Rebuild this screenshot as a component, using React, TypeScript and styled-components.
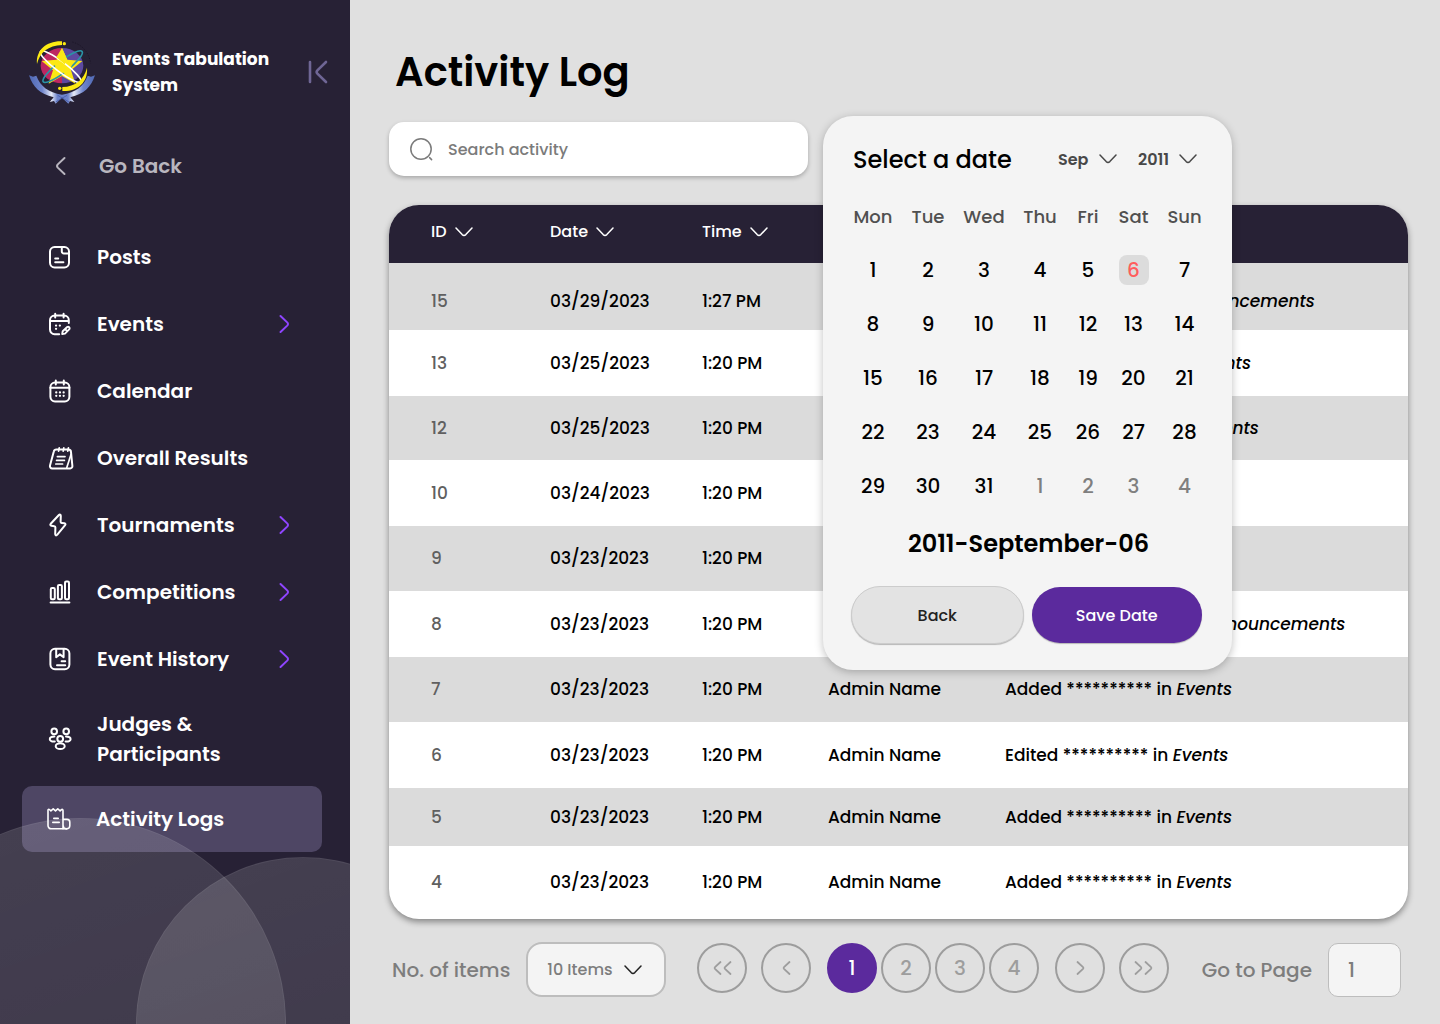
import React, { useState } from "react";
import styled, { createGlobalStyle, css } from "styled-components";

const ink = "#272135";
const purple = "#5b2a9d";

const GlobalStyle = createGlobalStyle`
  *, *::before, *::after { box-sizing: border-box; }
  body {
    margin: 0;
    background: #e0e0e0;
    font-family: Poppins, Inter, "Open Sans", sans-serif;
    font-size: 16px;
    font-weight: 500;
    color: #000;
  }
  button, input, select { font: inherit; color: inherit; }
  button, select { cursor: pointer; }
`;

const Page = styled.div`
  display: flex;
  min-height: 100vh;
`;

/* ---------- sidebar ---------- */

const Sidebar = styled.aside`
  position: relative;
  flex: none;
  width: 350px;
  overflow: hidden;
  background: ${ink};
  color: #fff;
`;

const Brand = styled.header`
  display: flex;
  align-items: center;
  height: 144px;
  padding: 0 20px 0 29px;
`;

const BrandName = styled.p`
  flex: 1;
  margin: 0 0 0 15px;
  font-size: 17px;
  font-weight: 700;
  line-height: 26px;
`;

const CollapseButton = styled.button`
  display: flex;
  padding: 0;
  border: 0;
  background: none;
  color: #6f6695;
`;

const BackLink = styled.a`
  display: flex;
  align-items: center;
  gap: 33px;
  height: 44px;
  margin-bottom: 35px;
  padding-left: 55px;
  color: #b9b6bf;
  font-size: 20px;
  font-weight: 600;
  text-decoration: none;
`;

const NavList = styled.ul`
  margin: 0;
  padding: 0 28px 0 22px;
  list-style: none;
`;

const NavLink = styled.a<{ $active?: boolean; $tall?: boolean }>`
  display: flex;
  align-items: center;
  gap: 26px;
  height: ${(p) => (p.$tall ? 94 : p.$active ? 66 : 67)}px;
  padding: 0 32px 0 ${(p) => (p.$active ? 24 : 25)}px;
  border-radius: 10px;
  background: ${(p) => (p.$active ? "#4e4664" : "transparent")};
  color: #fff;
  font-size: 20px;
  font-weight: 600;
  line-height: 30px;
  text-decoration: none;
  svg { overflow: visible; }
`;

const NavText = styled.span`
  flex: 1;
`;

const Bubble = styled.div<{ $size: number; $left: number }>`
  position: absolute;
  bottom: ${(p) => -p.$size / 2}px;
  left: ${(p) => p.$left}px;
  width: ${(p) => p.$size}px;
  height: ${(p) => p.$size}px;
  border: 1px solid rgba(255, 255, 255, 0.06);
  border-radius: 50%;
  background: linear-gradient(160deg, rgba(255, 255, 255, 0.14), rgba(255, 255, 255, 0.1));
  pointer-events: none;
`;

/* ---------- main ---------- */

const Main = styled.main`
  flex: 1;
  min-width: 0;
  padding: 42px 32px 26px 39px;
`;

const Title = styled.h1`
  margin: 0 0 20px 6px;
  font-size: 40px;
  font-weight: 600;
  line-height: 60px;
`;

const Toolbar = styled.div`
  position: relative;
  width: 419px;
  margin-bottom: 29px;
`;

const SearchBox = styled.label`
  display: flex;
  align-items: center;
  gap: 14px;
  height: 54px;
  padding: 0 20px;
  border-radius: 15px;
  background: #fff;
  color: #7b7b7b;
  box-shadow: 0 2px 4px rgba(0, 0, 0, 0.25);
`;

const SearchInput = styled.input`
  flex: 1;
  min-width: 0;
  padding: 0;
  border: 0;
  outline: 0;
  background: none;
  &::placeholder { color: #7b7b7b; opacity: 1; }
`;

const TableCard = styled.div`
  overflow: hidden;
  border-radius: 30px;
  background: #fff;
  box-shadow: 0 3px 6px rgba(0, 0, 0, 0.4);
`;

const LogTable = styled.table`
  width: 100%;
  table-layout: fixed;
  border-collapse: collapse;
  text-align: left;
`;

const Column = styled.col<{ $width?: number }>`
  width: ${(p) => (p.$width ? `${p.$width}px` : "auto")};
`;

const HeadRow = styled.tr`
  height: 58px;
  background: ${ink};
  color: #fff;
`;

const HeadCell = styled.th`
  padding: 0 0 5px;
  font-weight: 500;
  &:first-child { padding-left: 42px; }
`;

const SortButton = styled.button`
  display: flex;
  align-items: center;
  gap: 8px;
  padding: 0;
  border: 0;
  background: none;
`;

const Cell = styled.td`
  padding: 0 0 1px;
  font-size: 17px;
  white-space: nowrap;
  &:first-child { padding-left: 42px; color: #606060; }
`;

const Row = styled.tr<{ $height: number }>`
  height: ${(p) => p.$height}px;
  &:nth-child(odd) { background: #dbdbdb; }
  &:first-child ${Cell} { padding-top: 10px; }
`;

/* ---------- date picker ---------- */

const Picker = styled.section`
  position: absolute;
  top: -6px;
  left: calc(100% + 15px);
  z-index: 1;
  width: 409px;
  padding: 12px 20px 26px 22px;
  border-radius: 30px;
  background: #f4f4f4;
  box-shadow: 0 2px 8px rgba(0, 0, 0, 0.25);
`;

const PickerHead = styled.div`
  display: flex;
  align-items: center;
  height: 62px;
  padding: 0 15px 0 8px;
`;

const PickerTitle = styled.h2`
  flex: 1;
  margin: 0;
  font-size: 24px;
  font-weight: 500;
`;

const Drop = styled.div`
  display: grid;
  align-items: center;
  width: 59px;
  margin-left: 21px;
  color: #484848;
  > * { grid-area: 1 / 1; }
  > svg { justify-self: end; pointer-events: none; }
`;

const PlainSelect = styled.select`
  width: 100%;
  padding: 0;
  border: 0;
  outline: 0;
  appearance: none;
  background: none;
  font-size: 16px;
  font-weight: 600;
`;

const Days = styled.table`
  border-collapse: collapse;
  table-layout: fixed;
  width: 366px;
  text-align: center;
  tbody tr { height: 54px; }
  td { padding: 0; }
`;

const WeekDay = styled.th`
  height: 53px;
  padding: 0;
  color: #505050;
  font-size: 18px;
  font-weight: 500;
`;

const Day = styled.button<{ $muted?: boolean; $selected?: boolean }>`
  width: 30px;
  height: 30px;
  padding: 0;
  border: 0;
  border-radius: 8px;
  background: ${(p) => (p.$selected ? "#dcdcdc" : "none")};
  color: ${(p) => (p.$selected ? "#ff5c5c" : p.$muted ? "#7f7f7f" : "#000")};
  font-size: 20px;
`;

const Chosen = styled.output`
  display: block;
  font-size: 24px;
  font-weight: 600;
  line-height: 62px;
  text-align: center;
`;

const Actions = styled.div`
  display: flex;
  align-items: center;
  gap: 8px;
  margin-top: 11px;
  padding: 0 10px 0 6px;
`;

const Action = styled.button<{ $primary?: boolean }>`
  flex: 1;
  height: 58px;
  border: 1px solid #cccccc;
  border-radius: 29px;
  background: #e3e3e3;
  color: #222;
  box-shadow: 0 1px 1px rgba(0, 0, 0, 0.25);
  ${(p) =>
    p.$primary &&
    css`
      height: 56px;
      border: 0;
      background: ${purple};
      color: #fff;
    `}
`;

/* ---------- footer ---------- */

const Footer = styled.footer`
  display: flex;
  align-items: center;
  justify-content: space-between;
  margin-top: 23px;
  padding: 0 7px 0 3px;
  color: #7d7d7d;
  font-size: 20px;
`;

const Group = styled.div`
  display: flex;
  align-items: center;
  gap: 16px;
`;

const SizeBox = styled.div`
  display: grid;
  align-items: center;
  width: 140px;
  height: 55px;
  border: 2px solid #bdbdbd;
  border-radius: 16px;
  background: #f4f4f4;
  > * { grid-area: 1 / 1; }
  > svg { justify-self: end; margin-right: 22px; color: #222; pointer-events: none; }
`;

const SizeSelect = styled.select`
  width: 100%;
  height: 100%;
  padding: 0 19px;
  border: 0;
  outline: 0;
  appearance: none;
  background: none;
  color: #7d7d7d;
  font-size: 16px;
`;

const Pager = styled.nav`
  display: flex;
  align-items: center;
  gap: 14px;
  padding: 0 2px 4px 0;
`;

const Numbers = styled.div`
  display: flex;
  gap: 4px;
  margin: 0 2px;
`;

const PageButton = styled.button<{ $current?: boolean }>`
  display: flex;
  align-items: center;
  justify-content: center;
  width: 50px;
  height: 50px;
  padding: 0;
  border: 2px solid ${(p) => (p.$current ? purple : "#9d9d9d")};
  border-radius: 50%;
  background: ${(p) => (p.$current ? purple : "none")};
  color: ${(p) => (p.$current ? "#fff" : "#9d9d9d")};
`;

const PageInput = styled.input`
  width: 73px;
  height: 54px;
  padding: 0 19px;
  border: 1px solid #bdbdbd;
  border-radius: 10px;
  outline: 0;
  background: #f4f4f4;
`;

/* ---------- drawings ---------- */

const Chevron = () => (
  <svg width="18" height="10" viewBox="0 0 18 10" fill="none" stroke="currentColor" strokeWidth="1.5" strokeLinecap="round" strokeLinejoin="round" aria-hidden="true">
    <path d="M1 1l6.2 6.6q1.8 1.8 3.6 0L17 1" />
  </svg>
);

const SideChevron = ({ left = false, color = "currentColor" }: { left?: boolean; color?: string }) => (
  <svg width="11" height="20" viewBox="0 0 11 20" fill="none" stroke={color} strokeWidth="2" strokeLinecap="round" strokeLinejoin="round" aria-hidden="true">
    {left ? <path d="M9.5 2L2.8 8.4q-1.6 1.6 0 3.2L9.5 18" /> : <path d="M1.5 2l6.7 6.4q1.6 1.6 0 3.2L1.5 18" />}
  </svg>
);

const Arrows = ({ d, width }: { d: string; width: number }) => (
  <svg width={width} height="16" viewBox={`0 0 ${width} 16`} fill="none" stroke="currentColor" strokeWidth="1.8" strokeLinecap="round" strokeLinejoin="round" aria-hidden="true">
    <path d={d} />
  </svg>
);

const NavIcon = ({ light, children }: { light?: boolean; children: React.ReactNode }) => (
  <svg width="24" height="24" viewBox="0 0 24 24" fill="none" stroke="currentColor" strokeWidth={light ? 1.6 : 2} strokeLinecap="round" strokeLinejoin="round" aria-hidden="true">
    {children}
  </svg>
);

const icons: Record<string, React.ReactNode> = {
  posts: (
    <>
      <rect x="3" y="2" width="19" height="20.4" rx="4.6" />
      <path d="M14.8 2v4.4a2 2 0 0 0 2 2h5M8.2 13.4h3M8.2 17.3h8.2" />
    </>
  ),
  events: (
    <>
      <path d="M21.8 11V8.2a4.6 4.6 0 0 0-4.6-4.6H7.6A4.6 4.6 0 0 0 3 8.2v9.4a4.6 4.6 0 0 0 4.6 4.6h4.6M3 9h18.8M8.2 1.8v3.6M16.6 1.8v3.6" />
      <path d="M9 13.6h.1M12.8 13.6h.1M9 16.8h.1" strokeWidth="2.2" />
      <path d="M15.2 22l.5-2.8 4.5-4.2a1.6 1.6 0 0 1 2.2 2.2l-4.4 4.4zM18.6 17.6l1 1" strokeWidth="1.9" />
    </>
  ),
  calendar: (
    <>
      <rect x="3.4" y="3.6" width="19" height="18.8" rx="4.6" />
      <path d="M3.4 8.8h19M8.8 1.6v3.8M16.8 1.6v3.8" />
      <path d="M9.2 13.4h.1M12.9 13.4h.1M16.6 13.4h.1M9.2 16.8h.1M12.9 16.8h.1M16.6 16.8h.1" strokeWidth="2.2" />
    </>
  ),
  results: (
    <>
      <path d="M9.4 3.6h12a2.6 2.6 0 0 1 2.6 2.6l1.4 13.8a2.2 2.2 0 0 1-2.2 2.4H5.2A2.2 2.2 0 0 1 3 19.6L6.8 5.6a2.6 2.6 0 0 1 2.6-2z" />
      <path d="M12.2 1.8l-.6 3.4M16.8 1.8l-.6 3.4M21.4 1.8l-.6 3.4M10.4 10.6h7.6M9.6 14.4h7.8M8.8 18h6.8M24 8.4L19.8 21.6" strokeWidth="1.7" />
    </>
  ),
  bolt: <path d="M11.9 2L3.7 10.8c-.7.8-.4 1.8.7 2l3 .5c.7.1 1 .5 1 1.2l-.2 6.6c0 1.300 1 1.700 1.900.8l8-9.700c.7-.9.4-1.700-.7-1.900l-2.800-.4c-.7-.1-1-.5-1-1.200l.2-5.800C13.800 1.500 12.800 1.100 11.900 2z" />,
  bars: (
    <>
      <path d="M3.600 22.600h18.800" />
      <rect x="3.800" y="8" width="4" height="11.200" rx="1.200" />
      <rect x="10.900" y="5" width="4" height="14.200" rx="1.200" />
      <rect x="18" y="1.600" width="4" height="17.600" rx="1.200" />
    </>
  ),
  history: (
    <>
      <rect x="3.400" y="1.800" width="19" height="20.400" rx="4.600" />
      <path d="M9.200 2v8.200l3.700-2.800 3.700 2.800V2M14.600 14.200h3.600M10 18.200h8.200" />
    </>
  ),
  people: (
    <>
      <circle cx="7.200" cy="4.400" r="2.800" />
      <circle cx="19.200" cy="4.400" r="2.800" />
      <circle cx="13.200" cy="11.800" r="2.900" />
      <ellipse cx="13.200" cy="19.200" rx="4.500" ry="2.900" />
      <path d="M7.800 14.400C4.900 14.800 2.800 13.800 2.800 12.200c0-1.500 1.900-2.700 4.600-2.700M18.600 14.400c2.900.4 5-.6 5-2.200 0-1.500-1.900-2.700-4.600-2.700" />
    </>
  ),
  logs: (
    <>
      <path d="M17 3.400v18.400H5.200A3.200 3.200 0 0 1 2 18.600V3.200c0-.8.800-1.200 1.400-.7l1.500 1.300 2.300-2 2.300 2 2.300-2 2.300 2 1.400-1.200c.6-.5 1.500-.1 1.500.8zM17 12.400h4a2.800 2.800 0 0 1 2.800 2.800v3.400a3.300 3.300 0 0 1-6.600 0" />
      <path d="M7.800 11.400h4.400M6.800 15.400h6.400M17 21.800h3.600" />
    </>
  ),
};

const Logo = () => (
  <svg width="68" height="64" viewBox="28 32 204 192" role="img" aria-label="Events Tabulation System logo">
    <defs>
      <linearGradient id="ribbon">
        <stop offset="0" stopColor="#4f68b4" />
        <stop offset=".2" stopColor="#6f85cc" />
        <stop offset=".34" stopColor="#e6eaf8" />
        <stop offset=".43" stopColor="#6d83cb" />
        <stop offset=".59" stopColor="#6d83cb" />
        <stop offset=".68" stopColor="#e6eaf8" />
        <stop offset=".82" stopColor="#6f85cc" />
        <stop offset="1" stopColor="#4f68b4" />
      </linearGradient>
    </defs>
    <path d="M127 56a64 53 0 0 0 0 106z" fill="#bd2761" />
    <path d="M127 56a64 53 0 0 1 0 106z" fill="#5d4aa0" />
    <path d="M127 56l16 35 45 4-34 28 13 40-40-23-40 23 13-40-34-28 45-4z" fill="#fbe814" />
    <ellipse cx="129" cy="112" rx="74" ry="17" transform="rotate(-38 129 112)" fill="none" stroke="#2a93a5" strokeWidth="5" />
    <path d="M127 60l15 33 20 2-12 28 4 20-27-15-27 15 8-32-18-16 22-2z" fill="#fbe814" />
    <ellipse cx="123" cy="112" rx="76" ry="15" transform="rotate(37 123 112)" fill="none" stroke="#fff" strokeWidth="5" />
    <path d="M110 84l17-28 16 35-8 14z" fill="#fbe814" />
    <path d="M127 36C82 34 48 62 52 104c8-34 34-56 75-57z" fill="#fdeb12" />
    <path d="M128 185c45 2 78-26 74-70-9 36-35 57-74 58z" fill="#fdeb12" />
    <circle cx="134" cy="43" r="5" fill="#fdeb12" />
    <circle cx="120" cy="177" r="5" fill="#fdeb12" />
    <path d="M158 38c30 8 50 32 55 64" fill="none" stroke="#1c1628" strokeWidth="3" strokeDasharray="4 4" />
    <path d="M28 138l12 4 10-3c12 32 36 50 77 57 41-7 65-25 77-57l10 3 12-4c-12 36-32 56-74 66l12 14-13-3-5 8-19-18-19 18-5-8-13 3 12-14c-42-10-62-30-74-66z" fill="url(#ribbon)" />
    <path d="M108 218l34-20M148 218l-34-20" stroke="#4055a0" strokeWidth="2" />
  </svg>
);

/* ---------- data ---------- */

const navItems = [
  { label: "Posts", icon: "posts" },
  { label: "Events", icon: "events", more: true },
  { label: "Calendar", icon: "calendar" },
  { label: "Overall Results", icon: "results" },
  { label: "Tournaments", icon: "bolt", more: true },
  { label: "Competitions", icon: "bars", more: true },
  { label: "Event History", icon: "history", more: true },
  { label: "Judges & Participants", icon: "people", tall: true },
  { label: "Activity Logs", icon: "logs", active: true },
];

const logs = [
  { id: 15, date: "03/29/2023", time: "1:27 PM", verb: "Edited", place: "Announcements", height: 67 },
  { id: 13, date: "03/25/2023", time: "1:20 PM", verb: "Archived", place: "Events", height: 66 },
  { id: 12, date: "03/25/2023", time: "1:20 PM", verb: "Published", place: "Events", height: 64 },
  { id: 10, date: "03/24/2023", time: "1:20 PM", verb: "Edited", place: "Events", height: 66 },
  { id: 9, date: "03/23/2023", time: "1:20 PM", verb: "Edited", place: "Events", height: 65 },
  { id: 8, date: "03/23/2023", time: "1:20 PM", verb: "Published", place: "Announcements", height: 66 },
  { id: 7, date: "03/23/2023", time: "1:20 PM", verb: "Added", place: "Events", height: 65 },
  { id: 6, date: "03/23/2023", time: "1:20 PM", verb: "Edited", place: "Events", height: 66 },
  { id: 5, date: "03/23/2023", time: "1:20 PM", verb: "Added", place: "Events", height: 58 },
  { id: 4, date: "03/23/2023", time: "1:20 PM", verb: "Added", place: "Events", height: 73 },
];

const weekDays = [
  { name: "Mon", width: 56 },
  { name: "Tue", width: 54 },
  { name: "Wed", width: 58 },
  { name: "Thu", width: 54 },
  { name: "Fri", width: 42 },
  { name: "Sat", width: 49 },
  { name: "Sun", width: 53 },
];

const weeks = [0, 1, 2, 3, 4].map((w) => weekDays.map((_, d) => w * 7 + d + 1));

const DatePicker = () => {
  const [day, setDay] = useState(6);
  return (
    <Picker aria-label="Date picker">
      <PickerHead>
        <PickerTitle>Select a date</PickerTitle>
        <Drop>
          <PlainSelect aria-label="Month">
            <option>Sep</option>
          </PlainSelect>
          <Chevron />
        </Drop>
        <Drop>
          <PlainSelect aria-label="Year">
            <option>2011</option>
          </PlainSelect>
          <Chevron />
        </Drop>
      </PickerHead>
      <Days>
        <colgroup>
          {weekDays.map((d) => (
            <Column key={d.name} $width={d.width} />
          ))}
        </colgroup>
        <thead>
          <tr>
            {weekDays.map((d) => (
              <WeekDay key={d.name} scope="col">{d.name}</WeekDay>
            ))}
          </tr>
        </thead>
        <tbody>
          {weeks.map((week) => (
            <tr key={week[0]}>
              {week.map((n) => (
                <td key={n}>
                  <Day type="button" $muted={n > 31} $selected={n === day} onClick={() => n <= 31 && setDay(n)}>
                    {n > 31 ? n - 31 : n}
                  </Day>
                </td>
              ))}
            </tr>
          ))}
        </tbody>
      </Days>
      <Chosen>{`2011-September-${String(day).padStart(2, "0")}`}</Chosen>
      <Actions>
        <Action type="button">Back</Action>
        <Action type="button" $primary>Save Date</Action>
      </Actions>
    </Picker>
  );
};

export default function App() {
  const [page, setPage] = useState(1);
  return (
    <Page>
      <GlobalStyle />
      <Sidebar>
        <Brand>
          <Logo />
          <BrandName>Events Tabulation System</BrandName>
          <CollapseButton type="button" aria-label="Collapse sidebar">
            <svg width="24" height="26" viewBox="0 0 24 26" fill="none" stroke="currentColor" strokeWidth="2.6" strokeLinecap="round" strokeLinejoin="round">
              <path d="M4 3v20M20 3l-8.6 8.4q-1.5 1.6 0 3.2L20 23" />
            </svg>
          </CollapseButton>
        </Brand>
        <BackLink href="#back">
          <SideChevron left />
          Go Back
        </BackLink>
        <nav aria-label="Sections">
          <NavList>
            {navItems.map((item) => (
              <li key={item.label}>
                <NavLink href={`#${item.icon}`} $active={item.active} $tall={item.tall}>
                  <NavIcon light={item.active}>{icons[item.icon]}</NavIcon>
                  <NavText>{item.label}</NavText>
                  {item.more && <SideChevron color="#8f45ff" />}
                </NavLink>
              </li>
            ))}
          </NavList>
        </nav>
        <Bubble $size={412} $left={-126} />
        <Bubble $size={334} $left={136} />
      </Sidebar>

      <Main>
        <Title>Activity Log</Title>
        <Toolbar>
          <SearchBox>
            <svg width="25" height="25" viewBox="0 0 25 25" fill="none" stroke="currentColor" strokeWidth="1.5" strokeLinecap="round" aria-hidden="true">
              <circle cx="12" cy="12" r="10.2" />
              <path d="M20.6 20.6l2 2" />
            </svg>
            <SearchInput type="search" placeholder="Search activity" aria-label="Search activity" />
          </SearchBox>
          <DatePicker />
        </Toolbar>

        <TableCard>
          <LogTable>
            <colgroup>
              <Column $width={161} />
              <Column $width={152} />
              <Column $width={126} />
              <Column $width={177} />
              <Column />
            </colgroup>
            <thead>
              <HeadRow>
                {["ID", "Date", "Time"].map((name) => (
                  <HeadCell key={name} scope="col">
                    <SortButton type="button">
                      {name}
                      <Chevron />
                    </SortButton>
                  </HeadCell>
                ))}
                <HeadCell scope="col" aria-label="User" />
                <HeadCell scope="col" aria-label="Activity" />
              </HeadRow>
            </thead>
            <tbody>
              {logs.map((log) => (
                <Row key={log.id} $height={log.height}>
                  <Cell>{log.id}</Cell>
                  <Cell>{log.date}</Cell>
                  <Cell>{log.time}</Cell>
                  <Cell>Admin Name</Cell>
                  <Cell>
                    {log.verb} ********** in <em>{log.place}</em>
                  </Cell>
                </Row>
              ))}
            </tbody>
          </LogTable>
        </TableCard>

        <Footer>
          <Group>
            <label htmlFor="page-size">No. of items</label>
            <SizeBox>
              <SizeSelect id="page-size">
                <option>10 Items</option>
              </SizeSelect>
              <Chevron />
            </SizeBox>
          </Group>
          <Pager aria-label="Pages">
            <PageButton type="button" aria-label="First page" onClick={() => setPage(1)}>
              <Arrows width={20} d="M8.5 2L3 7.2q-.8.8 0 1.6l5.5 5.2M18.5 2L13 7.2q-.8.8 0 1.6l5.5 5.2" />
            </PageButton>
            <PageButton type="button" aria-label="Previous page" onClick={() => setPage(Math.max(1, page - 1))}>
              <Arrows width={11} d="M8.5 2L3 7.2q-.8.8 0 1.6l5.5 5.2" />
            </PageButton>
            <Numbers>
              {[1, 2, 3, 4].map((n) => (
                <PageButton key={n} type="button" $current={n === page} onClick={() => setPage(n)}>
                  {n}
                </PageButton>
              ))}
            </Numbers>
            <PageButton type="button" aria-label="Next page" onClick={() => setPage(Math.min(4, page + 1))}>
              <Arrows width={11} d="M2.5 2L8 7.2q.8.8 0 1.6L2.5 14" />
            </PageButton>
            <PageButton type="button" aria-label="Last page" onClick={() => setPage(4)}>
              <Arrows width={20} d="M1.5 2L7 7.2q.8.8 0 1.6L1.5 14M11.5 2L17 7.2q.8.8 0 1.6L11.5 14" />
            </PageButton>
          </Pager>
          <Group>
            <label htmlFor="page-number">Go to Page</label>
            <PageInput id="page-number" type="text" inputMode="numeric" defaultValue="1" />
          </Group>
        </Footer>
      </Main>
    </Page>
  );
}
